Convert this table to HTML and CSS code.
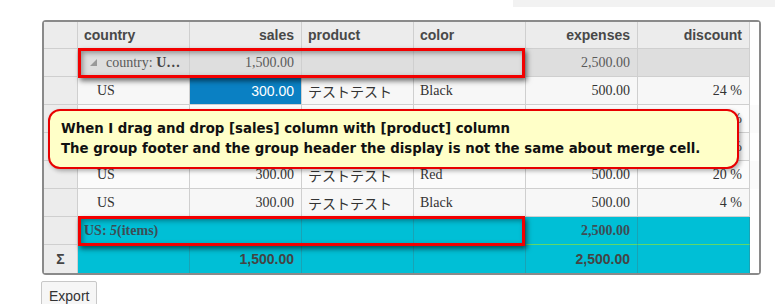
FILE: index.html
```html
<!DOCTYPE html>
<html lang="ja">

<head>
    <meta charset="UTF-8">
    <meta name="viewport" content="width=device-width, initial-scale=1.0">
    <title>Grid</title>
    <link rel="stylesheet" href="styles.css">
</head>

<body>
    <div class="topbar"><span class="search"></span></div>

    <div class="grid">
        <table class="sheet">
            <colgroup>
                <col class="c-head">
                <col class="c-data">
                <col class="c-data">
                <col class="c-data">
                <col class="c-data">
                <col class="c-data">
                <col class="c-data">
                <col class="c-fill">
            </colgroup>
            <thead>
                <tr class="hdr">
                    <th class="rh"></th>
                    <th>country</th>
                    <th class="num">sales</th>
                    <th>product</th>
                    <th>color</th>
                    <th class="num">expenses</th>
                    <th class="num">discount</th>
                    <th class="fill"></th>
                </tr>
            </thead>
            <tbody>
                <tr class="group">
                    <td class="rh"></td>
                    <td><span class="tri"></span>country: <b>U…</b></td>
                    <td class="num">1,500.00</td>
                    <td></td>
                    <td></td>
                    <td class="num">2,500.00</td>
                    <td></td>
                    <td class="fill"></td>
                </tr>
                <tr class="row">
                    <td class="rh"></td>
                    <td class="ind">US</td>
                    <td class="num sel">300.00</td>
                    <td>テストテスト</td>
                    <td>Black</td>
                    <td class="num">500.00</td>
                    <td class="num">24 %</td>
                    <td class="fill"></td>
                </tr>
                <tr class="row alt">
                    <td class="rh"></td>
                    <td class="ind">US</td>
                    <td class="num">300.00</td>
                    <td>テストテスト</td>
                    <td>White</td>
                    <td class="num">500.00</td>
                    <td class="num">10 %</td>
                    <td class="fill"></td>
                </tr>
                <tr class="row">
                    <td class="rh"></td>
                    <td class="ind">US</td>
                    <td class="num">300.00</td>
                    <td>テストテスト</td>
                    <td>Green</td>
                    <td class="num">500.00</td>
                    <td class="num">15 %</td>
                    <td class="fill"></td>
                </tr>
                <tr class="row alt">
                    <td class="rh"></td>
                    <td class="ind">US</td>
                    <td class="num">300.00</td>
                    <td>テストテスト</td>
                    <td>Red</td>
                    <td class="num">500.00</td>
                    <td class="num">20 %</td>
                    <td class="fill"></td>
                </tr>
                <tr class="row">
                    <td class="rh"></td>
                    <td class="ind">US</td>
                    <td class="num">300.00</td>
                    <td>テストテスト</td>
                    <td>Black</td>
                    <td class="num">500.00</td>
                    <td class="num">4 %</td>
                    <td class="fill"></td>
                </tr>
                <!-- 그룹 푸터 -->
                <tr class="gfoot">
                    <td class="rh"></td>
                    <td colspan="2" class="items">US: <i>5</i>(items)</td>
                    <td></td>
                    <td></td>
                    <td class="num ok">2,500.00</td>
                    <td class="ok"></td>
                    <td class="fill"></td>
                </tr>
                <!-- 합계 -->
                <tr class="total">
                    <td class="rh">Σ</td>
                    <td></td>
                    <td class="num">1,500.00</td>
                    <td></td>
                    <td></td>
                    <td class="num">2,500.00</td>
                    <td></td>
                    <td class="fill"></td>
                </tr>
            </tbody>
        </table>

        <span class="mark mark-head"></span>
        <span class="mark mark-foot"></span>

        <div class="note">
            When I drag and drop [sales] column with [product] column<br>
            The group footer and the group header the display is not the same about merge cell.
        </div>
    </div>

    <button type="button" class="btn-export">Export</button>
</body>

</html>
```

FILE: styles.css
```css
html,
body {
    margin: 0;
    padding: 0;
    background: #fff;
}

body {
    padding-left: 41px;
    overflow: hidden;
}

.topbar {
    display: flex;
    justify-content: flex-end;
    height: 7px;
}

.topbar .search {
    width: 262px;
    background: #f2f2f2;
}

/* 그리드 */
.grid {
    position: relative;
    width: 715px;
    margin: 13px 0 0 1px;
    border: 2px solid #8a8a8a;
    border-radius: 4px;
    background: #fff;
}

.sheet {
    table-layout: fixed;
    border-collapse: separate;
    border-spacing: 0;
    width: 715px;
    font-family: "Liberation Serif", "Noto Sans CJK JP", serif;
    font-size: 14px;
    color: #333;
}

.c-head {
    width: 34px;
}

.c-data {
    width: 112px;
}

.c-fill {
    width: 9px;
}

.sheet th,
.sheet td {
    box-sizing: border-box;
    height: 28px;
    padding: 0 6px;
    border-right: 1px solid #cfcfcf;
    border-bottom: 1px solid #cfcfcf;
    white-space: nowrap;
    overflow: hidden;
    text-align: left;
    font-weight: normal;
}

.sheet .fill {
    border: none;
    background: #fff;
}

.sheet .num {
    text-align: right;
    padding-right: 7px;
}

.sheet td.rh,
.sheet th.rh {
    background: #ececec;
    text-align: center;
    padding: 0;
}

/* 헤더 */
.hdr th {
    height: 27px;
    background: #ececec;
    font-family: "Liberation Sans", Arial, sans-serif;
    font-weight: bold;
    color: #484848;
}

/* 그룹 헤더 */
.group td {
    background: #dedede;
    color: #5a5a5a;
}

.group b {
    color: #444;
}

.tri {
    display: inline-block;
    width: 0;
    height: 0;
    margin: 0 9px 0 6px;
    border-left: 7px solid transparent;
    border-bottom: 7px solid #999;
    vertical-align: 1px;
}

/* 데이터 */
.row td {
    background: #f7f7f7;
}

.row.alt td {
    background: #fbfbfb;
}

.row td.rh {
    background: #ececec;
}

.row .ind {
    padding-left: 19px;
}

.row td.sel {
    background: #0a80c3;
    color: #fff;
    font-family: "Liberation Sans", Arial, sans-serif;
}

/* 그룹 푸터 */
.gfoot td,
.total td {
    background: #00bfd6;
    color: #3d4d55;
    border-right-color: #19a3b5;
    border-bottom-color: #19a3b5;
}

.gfoot td.ok {
    border-bottom-color: #5fd86a;
}

.gfoot td {
    font-weight: bold;
}

.gfoot .items {
    padding-left: 6px;
}

.total td {
    border-bottom: none;
    font-family: "Liberation Sans", Arial, sans-serif;
    font-weight: bold;
    color: #444;
}

.gfoot td.rh,
.total td.rh {
    background: #ececec;
    border-right-color: #cfcfcf;
    border-bottom-color: #cfcfcf;
}

.sheet .fill,
.gfoot td.fill,
.total td.fill {
    background: #fff;
    border: none;
}

/* 빨간 표시 */
.mark {
    position: absolute;
    left: 34px;
    width: 441px;
    height: 24px;
    border: 3px solid #f20000;
    box-shadow: 2px 3px 5px rgba(0, 0, 0, 0.55), inset 2px 2px 5px rgba(0, 0, 0, 0.35);
}

.mark-head {
    top: 26px;
}

.mark-foot {
    top: 194px;
}

/* 말풍선 */
.note {
    position: absolute;
    left: 4px;
    top: 87px;
    box-sizing: border-box;
    width: 691px;
    height: 60px;
    padding: 8px 0 0 11px;
    border: 2px solid #e80000;
    border-radius: 12px;
    background: #ffffc8;
    box-shadow: 2px 2px 4px rgba(0, 0, 0, 0.3);
    font-family: "DejaVu Sans", Verdana, sans-serif;
    font-weight: bold;
    font-size: 13.3px;
    line-height: 20px;
    color: #111;
}

/* 버튼 */
.btn-export {
    margin-top: 6px;
    height: 30px;
    padding: 0 7px;
    border: 1px solid #c8c8c8;
    border-radius: 2px;
    background: #f6f6f6;
    font-family: "Liberation Sans", Arial, sans-serif;
    font-size: 14px;
    color: #333;
    cursor: pointer;
}
```
